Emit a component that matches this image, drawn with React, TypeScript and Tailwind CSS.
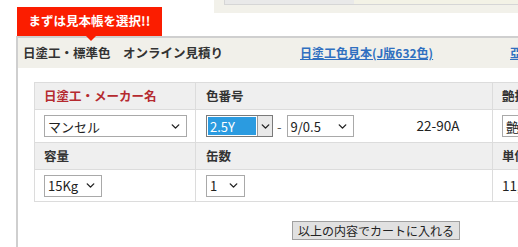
import React from "react";
import { ChevronDown } from "lucide-react";

const font = { fontFamily: '"Noto Sans CJK JP", "Noto Sans", sans-serif' };

function FakeSelect({ value, width }: { value: string; width: string }) {
  return (
    <div
      className={`${width} h-[22px] shrink-0 flex items-center justify-between border border-[#a9a9a9] bg-white pl-[3px] pr-[4px] text-[13px] leading-none text-[#222] whitespace-nowrap`}
    >
      <span>{value}</span>
      <ChevronDown size={13} strokeWidth={2.6} className="text-[#222]" />
    </div>
  );
}

export default function App() {
  return (
    <div className="w-[518px] h-[247px] overflow-hidden bg-white relative" style={font}>
      {/* top strip */}
      <div className="flex h-[36px]">
        <div className="ml-[17px] mt-[7px] w-[145px] h-[29px] bg-[#fb1d00] flex items-center justify-center text-white text-[12.5px] font-bold leading-none relative whitespace-nowrap">
          まずは見本帳を選択!!
          <span className="absolute left-[69px] top-[29px] w-0 h-0 border-l-[5px] border-r-[5px] border-t-[5px] border-l-transparent border-r-transparent border-t-[#fb1d00] z-10" />
        </div>
        <div className="ml-auto w-[304px] h-[13px] bg-[#f2f1ea] pl-[10px]">
          <div className="h-[5px] flex border-b border-l border-[#d6d6d6]">
            <div className="w-[129px] bg-[#e9e9e9]" />
            <div className="flex-1 bg-[#f3f2e6]" />
          </div>
        </div>
      </div>

      {/* main panel */}
      <div className="ml-[16px] w-[700px] border-l-[2px] border-t-[2px] border-[#cfcfcf] h-[211px]">
        <div className="h-[30px] bg-[#f1f0ea] flex items-center pl-[5px] text-[12.5px] leading-none whitespace-nowrap">
          <span className="w-[277px] shrink-0 font-bold text-[#333]">日塗工・標準色　オンライン見積り</span>
          <span className="w-[210px] shrink-0 font-bold text-[12px] text-[#2f6fc0] underline">日塗工色見本(J版632色)</span>
          <span className="font-bold text-[12px] text-[#2f6fc0] underline">亞鉛メッキ用</span>
        </div>

        <div className="mt-[14px] ml-[16px] w-[600px] border-t border-l border-[#dcdcdc] text-[13px] leading-none whitespace-nowrap">
          {/* row 1 */}
          <div className="flex h-[27px] bg-[#efefef] border-b border-[#dcdcdc] font-bold text-[12.5px]">
            <div className="w-[161px] shrink-0 border-r border-[#dcdcdc] flex items-center pl-[9px] text-[#b52a2f]">
              日塗工・メーカー名
            </div>
            <div className="w-[297px] shrink-0 border-r border-[#dcdcdc] flex items-center pl-[10px] text-[#333]">
              色番号
            </div>
            <div className="flex-1 flex items-center pl-[9px] text-[#333]">艶指定</div>
          </div>
          {/* row 2 */}
          <div className="flex h-[33px] border-b border-[#dcdcdc]">
            <div className="w-[161px] shrink-0 border-r border-[#dcdcdc] flex items-center pl-[9px]">
              <FakeSelect value="マンセル" width="w-[143px]" />
            </div>
            <div className="w-[297px] shrink-0 border-r border-[#dcdcdc] flex items-center pl-[10px] text-[#222]">
              <div className="w-[67px] h-[22px] shrink-0 flex border border-[#7a7a7a] bg-white">
                <div className="w-[48px] m-[1px] bg-[#2b9be0] text-white flex items-center pl-[2px] text-[13px]">2.5Y</div>
                <div className="flex-1 bg-[#e9e9e9] border-l border-[#9a9a9a] flex items-center justify-center">
                  <ChevronDown size={13} strokeWidth={2.6} className="text-[#222]" />
                </div>
              </div>
              <span className="ml-[4px] mr-[5px] text-[#555]">-</span>
              <FakeSelect value="9/0.5" width="w-[67px]" />
              <span className="ml-[63px] text-[13.5px] text-[#222]">22-90A</span>
            </div>
            <div className="flex-1 flex items-center pl-[9px]">
              <FakeSelect value="艶あり" width="w-[90px]" />
            </div>
          </div>
          {/* row 3 */}
          <div className="flex h-[27px] bg-[#efefef] border-b border-[#dcdcdc] font-bold text-[#333] text-[12.5px]">
            <div className="w-[161px] shrink-0 border-r border-[#dcdcdc] flex items-center pl-[9px]">容量</div>
            <div className="w-[297px] shrink-0 border-r border-[#dcdcdc] flex items-center pl-[10px]">缶数</div>
            <div className="flex-1 flex items-center pl-[9px]">単価</div>
          </div>
          {/* row 4 */}
          <div className="flex h-[32px] border-b border-[#dcdcdc]">
            <div className="w-[161px] shrink-0 border-r border-[#dcdcdc] flex items-center pl-[9px]">
              <FakeSelect value="15Kg" width="w-[58px]" />
            </div>
            <div className="w-[297px] shrink-0 border-r border-[#dcdcdc] flex items-center pl-[10px]">
              <FakeSelect value="1" width="w-[39px]" />
            </div>
            <div className="flex-1 flex items-center pl-[9px] text-[13.5px] text-[#222]">11,000円</div>
          </div>
        </div>

        <div className="flex mt-[19px] ml-[274px]">
          <button className="h-[19px] px-[5px] bg-[#e1e1e1] border border-[#a0a0a0] text-[12px] leading-none text-[#222] whitespace-nowrap">
            以上の内容でカートに入れる
          </button>
        </div>
      </div>
    </div>
  );
}
